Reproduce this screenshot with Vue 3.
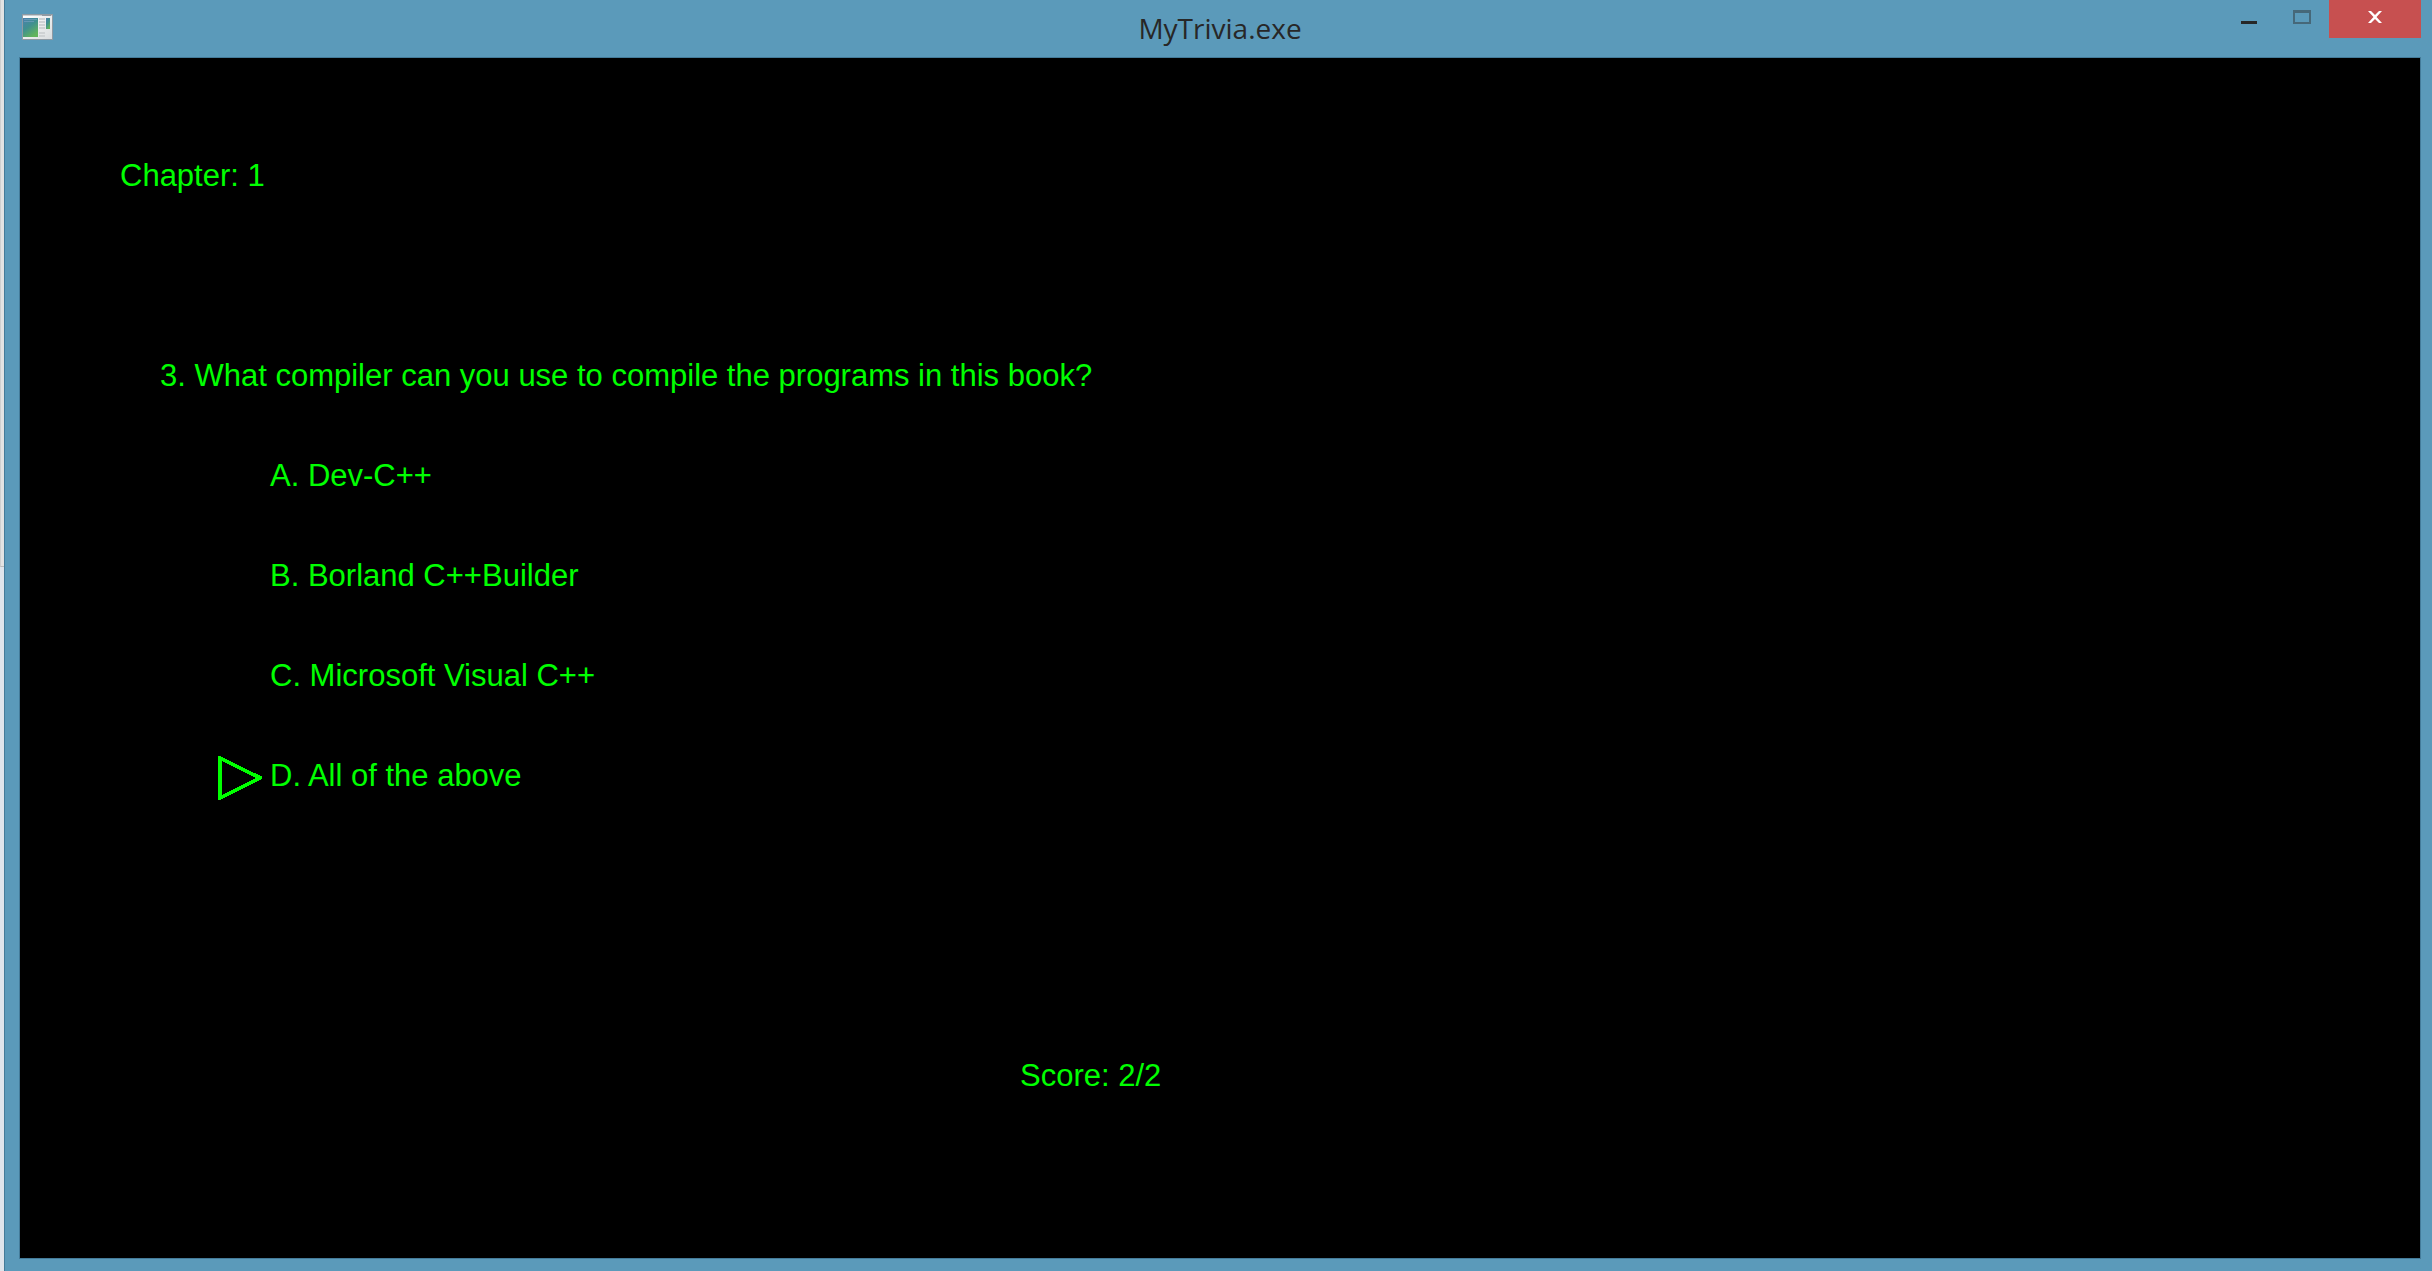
<script setup>
const answers = [
  { letter: 'A', text: 'Dev-C++' },
  { letter: 'B', text: 'Borland C++Builder' },
  { letter: 'C', text: 'Microsoft Visual C++' },
  { letter: 'D', text: 'All of the above' },
]
const selected = 'D'
</script>

<template>
  <div class="desktop">
    <div class="behind"><div class="behind-top"></div></div>
    <div class="window">
      <header class="titlebar">
        <svg class="app-icon" width="32" height="26" viewBox="0 0 32 26" aria-hidden="true">
          <defs>
            <linearGradient id="pane" x1="0" y1="0" x2="0.6" y2="1">
              <stop offset="0" stop-color="#4a7fae" />
              <stop offset="0.5" stop-color="#3f9090" />
              <stop offset="1" stop-color="#62b45c" />
            </linearGradient>
            <linearGradient id="sheet" x1="0" y1="0" x2="1" y2="1">
              <stop offset="0" stop-color="#ffffff" />
              <stop offset="1" stop-color="#d9dcde" />
            </linearGradient>
          </defs>
          <rect x="0.5" y="0.5" width="30" height="25" fill="url(#sheet)" stroke="#8f9aa3" />
          <rect x="1" y="1" width="29" height="1" fill="#c9ced2" />
          <rect x="20" y="1" width="9" height="1" fill="#8f9aa3" />
          <rect x="1" y="4" width="15" height="19" fill="url(#pane)" />
          <path d="M2 5.500H15M2 7.500H12" stroke="#7ba4c4" opacity="0.6" />
          <path d="M17 5H23M17 8H23M17 11H23M17 14H23M17 19H23M17 22H23" stroke="#cfd2d4" stroke-width="2" />
          <rect x="24" y="4" width="4" height="11" fill="url(#pane)" />
        </svg>
        <h1 class="title">MyTrivia.exe</h1>
        <div class="controls">
          <button class="control" type="button" aria-label="Minimize">
            <svg width="18" height="14" viewBox="0 0 18 14"><rect x="2" y="11" width="16" height="3" fill="#272727" /></svg>
          </button>
          <button class="control" type="button" aria-label="Maximize">
            <svg width="18" height="14" viewBox="0 0 18 14">
              <path d="M0 0H18V14H0ZM2 3V12H16V3Z" fill="#466879" fill-rule="evenodd" />
            </svg>
          </button>
          <button class="control close" type="button" aria-label="Close">
            <svg width="14" height="14" viewBox="0 0 14 14">
              <path d="M0 1H3L7 5L11 1H14L8.500 7L14 13H11L7 9L3 13H0L5.500 7Z" fill="#fff" />
            </svg>
          </button>
        </div>
      </header>
      <main class="stage">
        <p class="line">Chapter: 1</p>
        <section class="quiz">
          <h2 class="line">3. What compiler can you use to compile the programs in this book?</h2>
          <ul class="answers">
            <li v-for="a in answers" :key="a.letter" class="line answer">
              <svg v-if="a.letter === selected" class="pointer" width="44" height="44" viewBox="0 0 44 44" shape-rendering="crispEdges" aria-hidden="true">
                <path d="M2 2L42 22L2 42Z" fill="none" stroke="#0f0" stroke-width="4" />
              </svg>
              {{ a.letter }}. {{ a.text }}
            </li>
          </ul>
        </section>
        <p class="line score">Score: 2/2</p>
      </main>
    </div>
  </div>
</template>

<style>
body {
  margin: 0;
}
</style>

<style scoped>
.desktop {
  display: flex;
  min-height: 100vh;
  background: #5b9aba;
}
.behind {
  width: 4px;
  background: #dfe5ec;
}
.behind-top {
  height: calc(45vh - 5px);
  box-sizing: border-box;
  background: #e3e3e3;
  border-left: 1px solid #cfcfcf;
  border-bottom: 1px solid #bcbcbc;
}
.window {
  flex: 1;
  display: flex;
  flex-direction: column;
  box-sizing: border-box;
  padding: 0 11px 12px 14px;
  border-left: 1px solid #447b99;
}
.titlebar {
  display: grid;
  grid-template-columns: 1fr auto 1fr;
  height: 57px;
}
.app-icon {
  margin: 14px 0 0 3px;
}
.title {
  margin: 0;
  font: 400 28px/57px "Open Sans", "Noto Sans", sans-serif;
  color: #272727;
}
.controls {
  display: flex;
  justify-content: flex-end;
  align-items: flex-start;
}
.control {
  display: flex;
  align-items: center;
  justify-content: center;
  width: 54px;
  height: 34px;
  padding: 0;
  border: 0;
  background: transparent;
}
.close {
  width: 92px;
  height: 38px;
  padding-bottom: 4px;
  background: #c75050;
}
.stage {
  flex: 1;
  box-sizing: border-box;
  padding: 100px;
  border: 1px solid #447b99;
  background: #000;
  color: #0f0;
}
.line {
  margin: 0;
  font: 400 31px/36px "Liberation Sans", Arial, sans-serif;
}
.quiz {
  margin: 164px 0 0 40px;
}
.answers {
  display: flex;
  flex-direction: column;
  gap: 64px;
  margin: 64px 0 0 110px;
  padding: 0;
  list-style: none;
}
.answer {
  position: relative;
}
.pointer {
  position: absolute;
  right: 100%;
  top: -2px;
  margin-right: 8px;
}
.score {
  margin: 264px 0 0 900px;
}
</style>
